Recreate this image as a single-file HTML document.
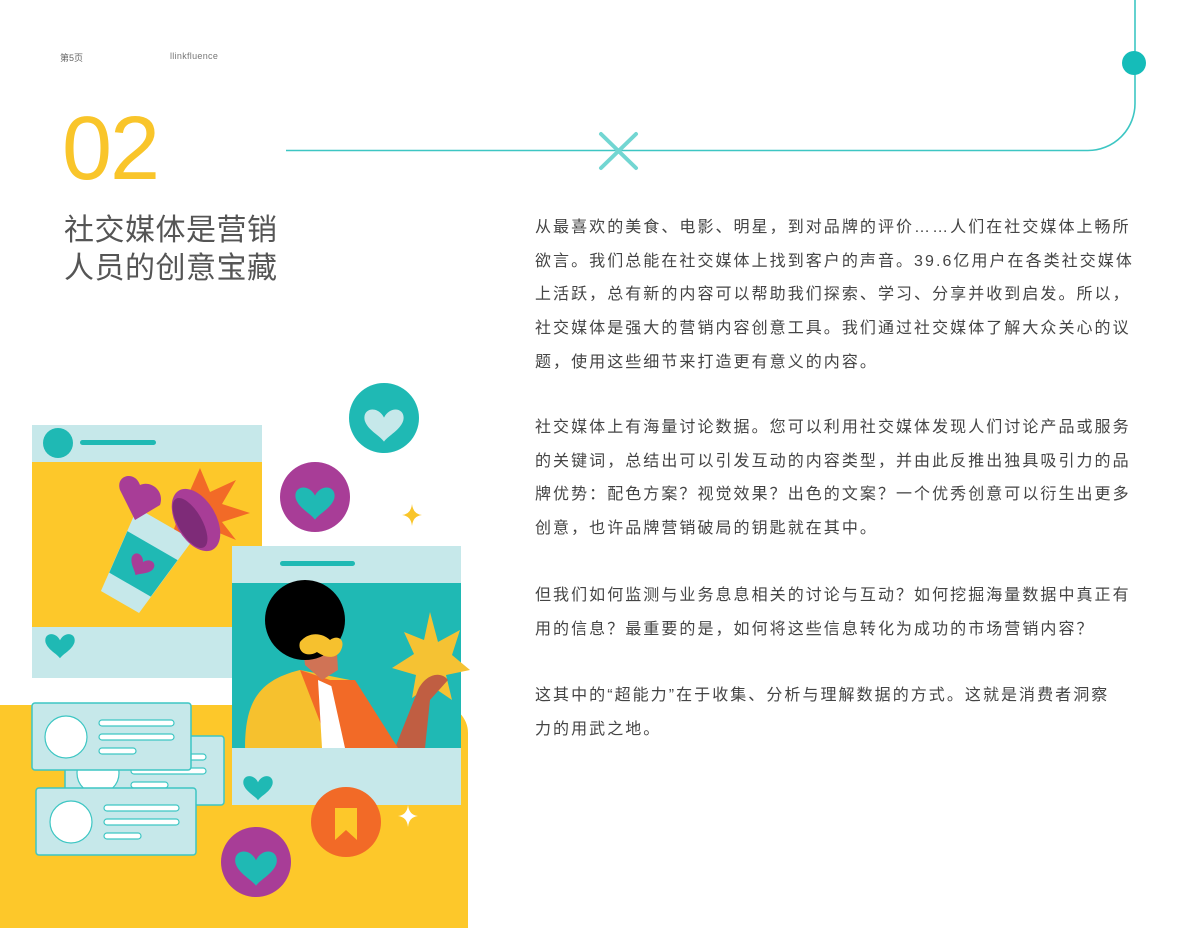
<!DOCTYPE html>
<html><head><meta charset="utf-8"><style>
body{margin:0;width:1200px;height:928px;overflow:hidden;background:#fff;position:relative;font-family:"Liberation Sans","Noto Sans CJK SC",sans-serif}
.a{position:absolute}
.p{position:absolute;left:535px;color:#444;font-size:16px;line-height:33.7px;letter-spacing:2.05px;white-space:nowrap}
</style></head><body>
<div class="a" style="left:60px;top:51px;font-size:9px;color:#666">第5页</div>
<div class="a" style="left:170px;top:51px;font-size:9px;color:#777;letter-spacing:.3px">llinkfluence</div>
<div class="a" style="left:62px;top:99px;font-size:90px;color:#f9c52a;font-weight:300;line-height:100px;letter-spacing:-2px">02</div>
<div class="a" style="left:64px;top:212px;font-size:30px;line-height:38px;color:#555;letter-spacing:.5px">社交媒体是营销<br>人员的创意宝藏</div>
<svg class="a" style="left:0;top:0" width="1200" height="200">
<path d="M286 150.5 H1088 A47 47 0 0 0 1135 103 V0" fill="none" stroke="#3dc6c3" stroke-width="1.6"/>
<circle cx="1134" cy="63" r="12" fill="#15bcb9"/>
<path d="M601 134 L636 168 M636 134 L601 168" stroke="#72d6d2" stroke-width="4" stroke-linecap="round"/>
</svg>
<div class="p" style="top:211px">从最喜欢的美食、电影、明星，到对品牌的评价……人们在社交媒体上畅所<br>欲言。我们总能在社交媒体上找到客户的声音。39.6亿用户在各类社交媒体<br>上活跃，总有新的内容可以帮助我们探索、学习、分享并收到启发。所以，<br>社交媒体是强大的营销内容创意工具。我们通过社交媒体了解大众关心的议<br>题，使用这些细节来打造更有意义的内容。</div>
<div class="p" style="top:411px">社交媒体上有海量讨论数据。您可以利用社交媒体发现人们讨论产品或服务<br>的关键词，总结出可以引发互动的内容类型，并由此反推出独具吸引力的品<br>牌优势：配色方案？视觉效果？出色的文案？一个优秀创意可以衍生出更多<br>创意，也许品牌营销破局的钥匙就在其中。</div>
<div class="p" style="top:579px">但我们如何监测与业务息息相关的讨论与互动？如何挖掘海量数据中真正有<br>用的信息？最重要的是，如何将这些信息转化为成功的市场营销内容？</div>
<div class="p" style="top:679px">这其中的“超能力”在于收集、分析与理解数据的方式。这就是消费者洞察<br>力的用武之地。</div>
<svg class="a" style="left:0;top:380px" width="480" height="548">
<defs><path id="h" d="M0 6 C-4 -2 -14 0 -12 8 C-10 14 -3 17 0 21 C3 17 10 14 12 8 C14 0 4 -2 0 6Z"/></defs>
<path d="M0 325 H440 A28 28 0 0 1 468 353 V548 H0Z" fill="#fdc82a"/>
<!-- card1 -->
<rect x="32" y="45" width="230" height="253" fill="#c6e8ea"/>
<rect x="32" y="82" width="230" height="165" fill="#fdc82a"/>
<circle cx="58" cy="63" r="15" fill="#1fb9b4"/>
<rect x="80" y="60" width="76" height="5" rx="2.5" fill="#1fb9b4"/>
<use href="#h" transform="translate(60,253) scale(1.2)" fill="#1fb9b4"/>
<polygon points="200,88 210,112 236,100 222,124 250,133 222,142 236,160 212,150 200,170 190,148 170,160 178,138" fill="#f26a27"/>
<g transform="rotate(30 150 170)"><path d="M118 140 L182 140 L172 230 L128 230Z" fill="#c6e8ea"/><path d="M121 165 L179 165 L174 210 L126 210Z" fill="#1fb9b4"/><use href="#h" transform="translate(150,178)" fill="#a83d97"/></g>
<path d="M120 110 C115 95 135 90 140 105 C150 100 165 110 160 125 L135 140 Z" fill="#a83d97"/>
<ellipse cx="196" cy="140" rx="20" ry="34" transform="rotate(-30 196 140)" fill="#a83d97"/>
<ellipse cx="190" cy="143" rx="12" ry="28" transform="rotate(-30 190 143)" fill="#7e2b78"/>
<!-- card2 -->
<rect x="232" y="166" width="229" height="259" fill="#c6e8ea"/>
<rect x="232" y="203" width="229" height="165" fill="#1fb9b4"/>
<rect x="280" y="181" width="75" height="5" rx="2.5" fill="#1fb9b4"/>
<use href="#h" transform="translate(258,395) scale(1.2)" fill="#1fb9b4"/>
<polygon points="430,232 438,262 460,250 452,275 470,290 446,295 452,320 430,305 412,318 416,295 392,288 414,274 404,252 424,260" fill="#f5c233"/>
<path d="M395 368 L418 310 C425 295 440 290 448 300 L430 320 L425 368Z" fill="#c05e42"/>
<path d="M245 368 C245 320 260 300 300 290 L350 300 L395 368Z" fill="#f6c12e"/>
<path d="M300 290 L330 300 L360 368 L330 368Z" fill="#f26a27"/>
<path d="M318 300 L340 310 L348 368 L322 368Z" fill="#fff"/>
<path d="M330 300 L355 300 L398 368 L345 368Z" fill="#f26a27"/>
<path d="M300 240 L335 240 L338 290 L322 300 L305 285Z" fill="#d07355"/>
<circle cx="305" cy="240" r="40" fill="#000"/>
<path d="M300 262 C310 250 324 254 330 260 C338 254 347 260 340 272 C332 282 320 274 317 272 C307 278 297 272 300 262Z" fill="#f6c12e"/>
<!-- comment cards: B, C, A -->
<g stroke="#3dc6c3" stroke-width="1.5" fill="#c6e8ea"><rect x="65" y="356" width="159" height="69" rx="3"/></g>
<g stroke="#3dc6c3" stroke-width="1.2" fill="#fff"><circle cx="98" cy="393" r="21"/><rect x="131" y="374" width="75" height="6" rx="3"/><rect x="131" y="388" width="75" height="6" rx="3"/><rect x="131" y="402" width="37" height="6" rx="3"/></g>
<g stroke="#3dc6c3" stroke-width="1.5" fill="#c6e8ea"><rect x="36" y="408" width="160" height="67" rx="3"/></g>
<g stroke="#3dc6c3" stroke-width="1.2" fill="#fff"><circle cx="71" cy="442" r="21"/><rect x="104" y="425" width="75" height="6" rx="3"/><rect x="104" y="439" width="75" height="6" rx="3"/><rect x="104" y="453" width="37" height="6" rx="3"/></g>
<g stroke="#3dc6c3" stroke-width="1.5" fill="#c6e8ea"><rect x="32" y="323" width="159" height="67" rx="3"/></g>
<g stroke="#3dc6c3" stroke-width="1.2" fill="#fff"><circle cx="66" cy="357" r="21"/><rect x="99" y="340" width="75" height="6" rx="3"/><rect x="99" y="354" width="75" height="6" rx="3"/><rect x="99" y="368" width="37" height="6" rx="3"/></g>
<!-- bubbles -->
<circle cx="384" cy="38" r="35" fill="#1fb9b4"/><use href="#h" transform="translate(384,28) scale(1.6)" fill="#c6e8ea"/>
<circle cx="315" cy="117" r="35" fill="#a83d97"/><use href="#h" transform="translate(315,106) scale(1.6)" fill="#1fb9b4"/>
<circle cx="256" cy="482" r="35" fill="#a83d97"/><use href="#h" transform="translate(256,470) scale(1.7)" fill="#1fb9b4"/>
<circle cx="346" cy="442" r="35" fill="#f26a27"/><path d="M335 428 H357 V460 L346 450 L335 460Z" fill="#fdc82a"/>
<path d="M412 124 Q413 134 422 135 Q413 136 412 146 Q411 136 402 135 Q411 134 412 124Z" fill="#f9c52a"/>
<path d="M408 425 Q409 435 418 436 Q409 437 408 447 Q407 437 398 436 Q407 435 408 425Z" fill="#fff"/>
</svg>
</body></html>
